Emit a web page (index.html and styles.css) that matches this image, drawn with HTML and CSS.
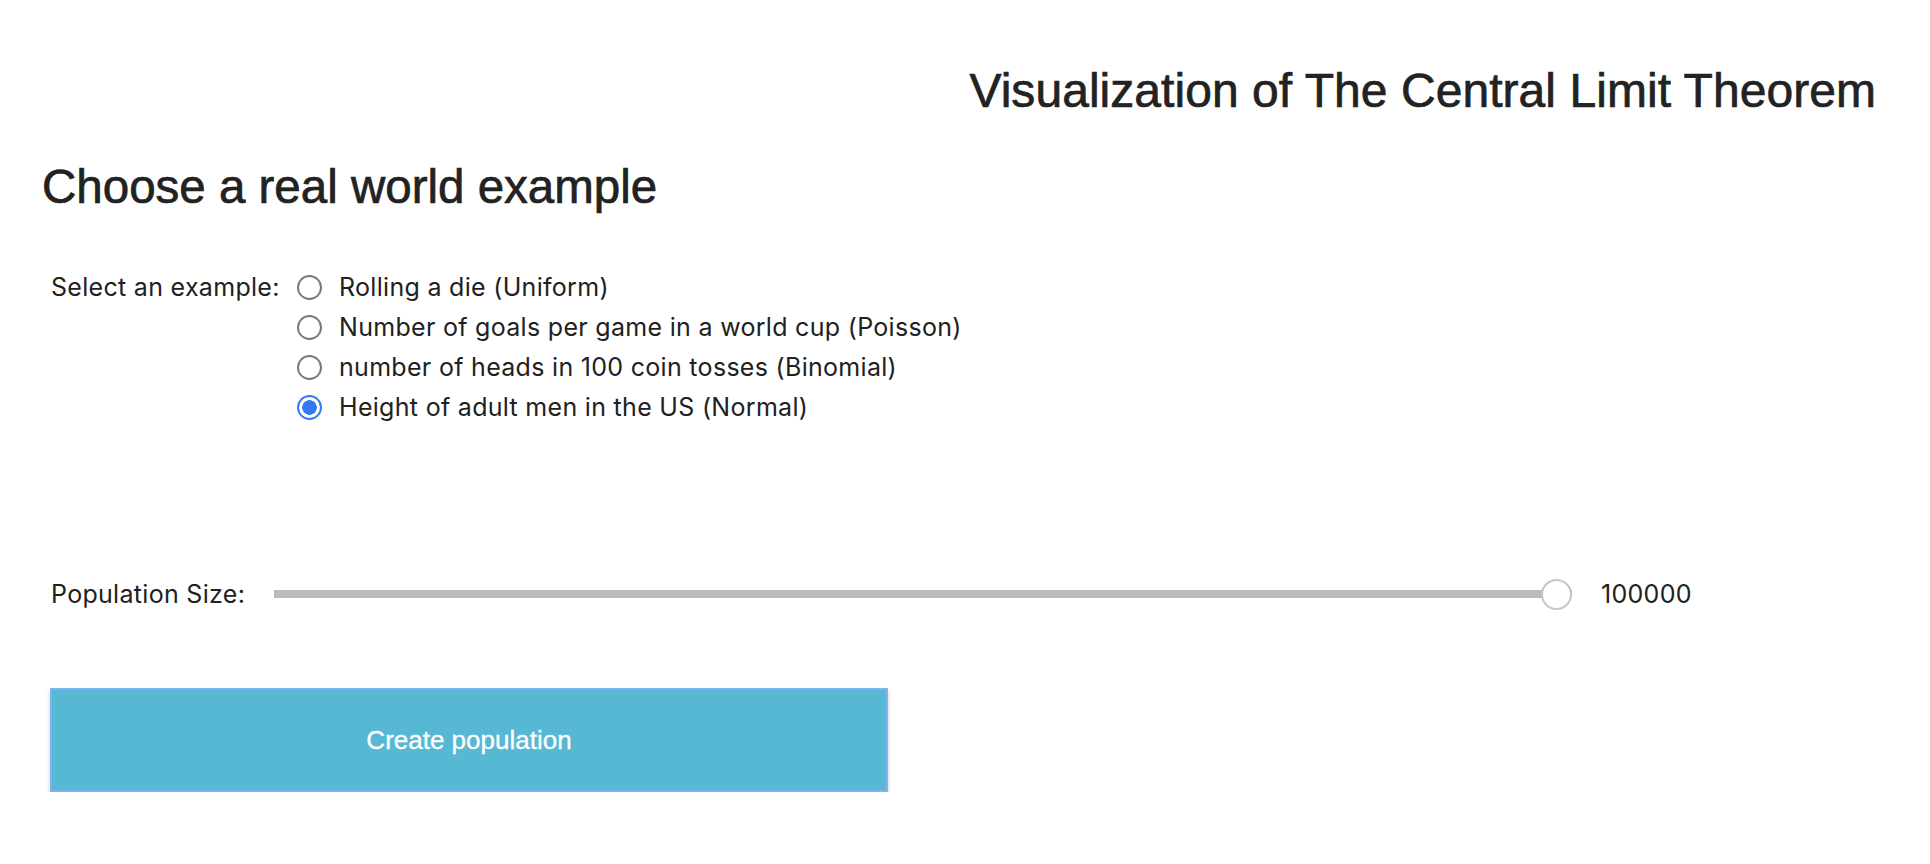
FILE: index.html
```html
<!DOCTYPE html>
<html lang="en">
<head>
<meta charset="utf-8">
<title>Central Limit Theorem</title>
<link rel="stylesheet" href="styles.css">
</head>
<body>
<main class="page">
  <h2 class="title">Visualization of The Central Limit Theorem</h2>
  <h2 class="section-title">Choose a real world example</h2>

  <form class="example-form">
    <div class="example-row">
      <span class="field-label">Select an example:</span>
      <div class="options">
        <label class="option"><input type="radio" name="example" class="radio"><span>Rolling a die (Uniform)</span></label>
        <label class="option"><input type="radio" name="example" class="radio"><span>Number of goals per game in a world cup (Poisson)</span></label>
        <label class="option"><input type="radio" name="example" class="radio"><span>number of heads in 100 coin tosses (Binomial)</span></label>
        <label class="option"><input type="radio" name="example" class="radio" checked><span>Height of adult men in the US (Normal)</span></label>
      </div>
    </div>

    <div class="slider-row">
      <span class="field-label">Population Size:</span>
      <input type="range" class="range" min="100" max="100000" value="100000">
      <span class="range-value">100000</span>
    </div>

    <button type="button" class="create-btn">Create population</button>
  </form>
</main>
</body>
</html>
```

FILE: styles.css
```css
html, body {
  margin: 0;
  padding: 0;
  background: #ffffff;
}

body {
  font-family: Inter, "Noto Sans", "Liberation Sans", sans-serif;
  font-size: 25px;
  letter-spacing: 0.3px;
  color: #212121;
}

.page {
  display: flex;
  flex-direction: column;
}

.title {
  margin: 62px 54px 0 0;
  font-family: "Liberation Sans", Arial, sans-serif;
  font-weight: 400;
  font-size: 48px;
  line-height: 57.6px;
  letter-spacing: 0.05px;
  text-align: right;
  color: #222222;
  -webkit-text-stroke: 0.7px #222222;
}

.section-title {
  margin: 38px 0 0 42px;
  font-family: "Liberation Sans", Arial, sans-serif;
  font-weight: 400;
  font-size: 47.5px;
  line-height: 57.6px;
  letter-spacing: 0;
  color: #222222;
  -webkit-text-stroke: 0.7px #222222;
}

.example-form {
  display: flex;
  flex-direction: column;
  align-items: flex-start;
  padding-left: 51px;
  margin-top: 52px;
}

.example-row {
  display: grid;
  grid-template-columns: 246px auto;
  align-items: start;
}

.field-label {
  line-height: 40px;
  white-space: nowrap;
}

.options {
  display: flex;
  flex-direction: column;
}

.option {
  display: flex;
  align-items: center;
  height: 40px;
  gap: 17px;
}

.radio {
  appearance: none;
  -webkit-appearance: none;
  margin: 0;
  width: 25px;
  height: 25px;
  border: 2px solid #7a7a7a;
  border-radius: 50%;
  background: #fff;
  box-sizing: border-box;
}

.radio:checked {
  border: 2.5px solid #3478f6;
  background: radial-gradient(circle, #3478f6 0 7px, #ffffff 7.6px);
}

.slider-row {
  display: grid;
  grid-template-columns: 223px 1298px auto;
  align-items: center;
  height: 40px;
  margin-top: 147px;
}

.range-value {
  margin-left: 29px;
  line-height: 40px;
}

.range {
  -webkit-appearance: none;
  appearance: none;
  margin: 0;
  width: 1298px;
  height: 32px;
  background: transparent;
}

.range::-webkit-slider-runnable-track {
  height: 8px;
  background: #bbbbbb;
  border: none;
}

.range::-webkit-slider-thumb {
  -webkit-appearance: none;
  appearance: none;
  width: 31px;
  height: 31px;
  margin-top: -11.5px;
  border-radius: 50%;
  background: #ffffff;
  border: 2px solid #c6c6c6;
  box-sizing: border-box;
}

.create-btn {
  margin-top: 74px;
  margin-left: -1px;
  width: 838px;
  height: 104px;
  background: #57b8d3;
  border: 2px solid #7fb2f2;
  box-shadow: 0 3px 4px rgba(0, 0, 0, 0.22);
  color: #ffffff;
  font-family: "Liberation Sans", Arial, sans-serif;
  font-size: 26px;
  letter-spacing: 0;
  -webkit-text-stroke: 0.3px #ffffff;
  cursor: pointer;
}
```
